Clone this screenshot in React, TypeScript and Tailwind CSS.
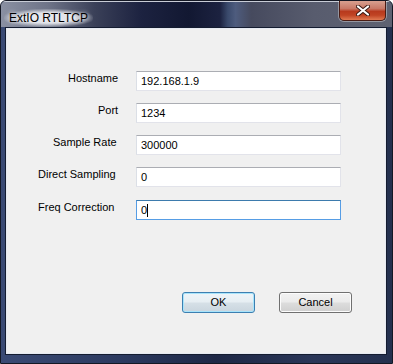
import React from "react";

const font = { fontFamily: '"Liberation Sans", Arial, sans-serif' };

interface FieldProps {
  label: string;
  value: string;
  labelLeft: string;
  focused?: boolean;
}

function Field({ label, value, labelLeft, focused }: FieldProps) {
  return (
    <div className="flex items-start h-[20px]">
      <div className="w-[129px] shrink-0">
        <span className={`block whitespace-nowrap leading-[14px] text-[11px] text-black ${labelLeft}`}>
          {label}
        </span>
      </div>
      <div
        className={`w-[205px] h-[20px] bg-white border flex items-center pl-[4px] pt-px text-[11px] text-black ${
          focused
            ? "border-[#569de5] border-t-[#3d7bad]"
            : "border-[#e2e3ea] border-t-[#abadb3] border-l-[#dbdfe6]"
        }`}
      >
        <span>{value}</span>
        {focused && <span className="w-px h-[13px] bg-black" />}
      </div>
    </div>
  );
}

function WinButton({ label, isDefault }: { label: string; isDefault?: boolean }) {
  return (
    <button
      className={`w-[73px] h-[21px] rounded-[3px] border text-[11px] text-black ${
        isDefault
          ? "border-[#3c7fb1] shadow-[inset_0_0_0_1px_#a8e4fb] bg-[linear-gradient(#eef4f8_0%,#e6eef3_48%,#d6e0e7_52%,#c9d5de_100%)]"
          : "border-[#707070] shadow-[inset_0_0_0_1px_#fcfcfc] bg-[linear-gradient(#f2f2f2_0%,#ebebeb_48%,#dddddd_52%,#cfcfcf_100%)]"
      }`}
    >
      {label}
    </button>
  );
}

export default function App() {
  return (
    <div
      style={font}
      className="w-[393px] h-[364px] flex flex-col border border-[#141824] rounded-t-[6px] overflow-hidden bg-[linear-gradient(90deg,#3a4a74_0%,#2c3a60_30%,#1e2846_55%,#2a3658_80%,#24304e_100%)]"
    >
      {/* title bar */}
      <div className="h-[26px] shrink-0 flex items-start justify-between border-t border-[#c8ccd6] bg-[linear-gradient(90deg,#8a90a2_0%,#6e7488_12%,#3a4058_24%,#1c2240_36%,#121832_48%,#1c2240_56%,#3a4a6c_58%,#4e5c7e_60%,#464a5e_64%,#585c6e_80%,#5e6272_100%)]">
        <div className="pl-[3px] pt-[3px]">
          <span className="inline-block px-[5px] leading-[18px] text-[12px] text-black rounded-full bg-[radial-gradient(ellipse_at_center,rgba(230,232,238,0.95)_40%,rgba(200,204,214,0)_75%)] [text-shadow:0_0_4px_#ffffff]">
            ExtIO RTLTCP
          </span>
        </div>
        <div className="mr-[6px] -mt-px w-[47px] h-[20px] rounded-b-[5px] border border-t-0 border-[#4a1c14] shadow-[0_0_0_1px_rgba(255,255,255,0.35)] bg-[linear-gradient(#d8a090_0%,#c87866_40%,#b83a1e_55%,#c04424_75%,#e07a52_100%)] flex items-center justify-center">
          <svg width="14" height="11" viewBox="0 0 14 11">
            <path d="M2 1.5 L12 9.5 M12 1.5 L2 9.5" stroke="#3a1a14" strokeWidth="4" strokeLinecap="round" />
            <path d="M2 1.5 L12 9.5 M12 1.5 L2 9.5" stroke="#ffffff" strokeWidth="2.2" strokeLinecap="round" />
          </svg>
        </div>
      </div>

      {/* client */}
      <div className="ml-[4px] mr-[5px] mb-[8px] flex-1 border border-[#141c30]">
        <div className="h-full border border-[#e6eaf2] bg-[#f0f0f0] flex flex-col pt-[42px]">
          <div className="flex flex-col gap-[12px]">
            <Field label="Hostname" value="192.168.1.9" labelLeft="pl-[61px]" />
            <Field label="Port" value="1234" labelLeft="pl-[91px]" />
            <Field label="Sample Rate" value="300000" labelLeft="pl-[46px]" />
            <Field label="Direct Sampling" value="0" labelLeft="pl-[31px]" />
            <div className="mt-px">
              <Field label="Freq Correction" value="0" labelLeft="pl-[31px]" focused />
            </div>
          </div>
          <div className="flex gap-[24px] pl-[175px] mt-[72px]">
            <WinButton label="OK" isDefault />
            <WinButton label="Cancel" />
          </div>
        </div>
      </div>
    </div>
  );
}
